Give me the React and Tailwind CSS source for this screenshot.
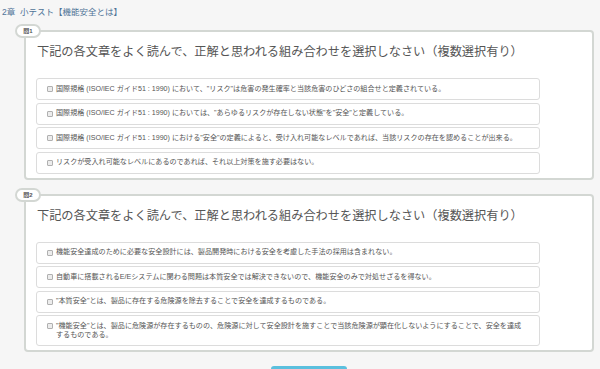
import React from "react";

const questions = [
  {
    label: "問1",
    options: [
      "国際規格 (ISO/IEC ガイド51 : 1990) において、\"リスク\"は危害の発生確率と当該危害のひどさの組合せと定義されている。",
      "国際規格 (ISO/IEC ガイド51 : 1990) においては、\"あらゆるリスクが存在しない状態\"を\"安全\"と定義している。",
      "国際規格 (ISO/IEC ガイド51 : 1990) における\"安全\"の定義によると、受け入れ可能なレベルであれば、当該リスクの存在を認めることが出来る。",
      "リスクが受入れ可能なレベルにあるのであれば、それ以上対策を施す必要はない。",
    ],
  },
  {
    label: "問2",
    options: [
      "機能安全達成のために必要な安全設計には、製品開発時における安全を考慮した手法の採用は含まれない。",
      "自動車に搭載されるE/Eシステムに関わる問題は本質安全では解決できないので、機能安全のみで対処せざるを得ない。",
      "\"本質安全\"とは、製品に存在する危険源を除去することで安全を達成するものである。",
      ["\"機能安全\"とは、製品に危険源が存在するものの、危険源に対して安全設計を施すことで当該危険源が顕在化しないようにすることで、安全を達成", "するものである。"],
    ],
  },
];

const font = { fontFamily: '"Liberation Sans", "Noto Sans CJK JP", sans-serif' };

const Option = ({ text }) => (
  <div className="flex items-start border border-[#dcdcdc] rounded-[3px] bg-white pl-[10px] pr-[8px] py-[5.5px]">
    <span className="mt-[1.5px] mr-[3px] w-[6px] h-[6px] shrink-0 border border-[#b0b0b0] bg-[#ececec] rounded-[1px]" />
    <span className="text-[7.1px] leading-[9px] text-[#555]">
      {Array.isArray(text) ? (
        <>
          {text[0]}
          <br />
          {text[1]}
        </>
      ) : (
        text
      )}
    </span>
  </div>
);

const Question = ({ q }) => (
  <div className="relative border-2 border-[#d3d7d3] rounded-[4px] bg-white pl-[10px] pr-[52px] pt-[12px] pb-[4px]">
    <div className="absolute left-[-11px] top-[-8px] w-[26px] h-[14px] rounded-full border-2 border-[#d3d7d3] bg-white flex items-center justify-center">
      <span className="text-[6px] font-bold text-[#555] leading-none">{q.label}</span>
    </div>
    <div className="text-[12.2px] leading-[16px] text-[#555] pl-[1px]">
      下記の各文章をよく読んで、正解と思われる組み合わせを選択しなさい（複数選択有り）
    </div>
    <div className="mt-[18px] flex flex-col gap-[2.5px]">
      {q.options.map((o, i) => (
        <Option key={i} text={o} />
      ))}
    </div>
  </div>
);

export default function App() {
  return (
    <div className="w-[600px] h-[369px] overflow-hidden bg-[#f6f6f6]" style={font}>
      <div className="h-[24px] leading-[24px] pl-[2px] text-[8.5px] text-[#4f7396]">
        2章&nbsp;&nbsp;小テスト【機能安全とは】
      </div>
      <div className="ml-[24px] mr-[6px] mt-[6px] flex flex-col gap-[14px]">
        {questions.map((q) => (
          <Question key={q.label} q={q} />
        ))}
      </div>
      <div className="ml-[24px] mr-[6px] mt-[14px] flex justify-center">
        <div className="w-[76px] h-[20px] rounded-[3px] bg-[#5bc0de]" />
      </div>
    </div>
  );
}
